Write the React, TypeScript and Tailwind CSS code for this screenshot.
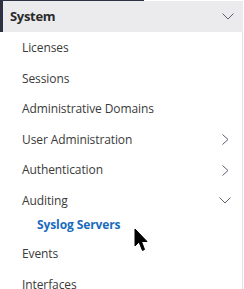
type Item = {
  label: string;
  icon?: 'right' | 'down';
  active?: boolean;
  sub?: boolean;
};

const items: Item[] = [
  { label: 'Licenses' },
  { label: 'Sessions' },
  { label: 'Administrative Domains' },
  { label: 'User Administration', icon: 'right' },
  { label: 'Authentication', icon: 'right' },
  { label: 'Auditing', icon: 'down' },
  { label: 'Syslog Servers', sub: true, active: true },
  { label: 'Events' },
  { label: 'Interfaces' },
];

function Chevron({ dir }: { dir: 'right' | 'down' }) {
  if (dir === 'down') {
    return (
      <svg width="12" height="7" viewBox="0 0 12 7" className="text-[#5a6070]">
        <path d="M0.5 0.5 L6 6 L11.5 0.5" fill="none" stroke="currentColor" strokeWidth="1" />
      </svg>
    );
  }
  return (
    <svg width="7" height="11" viewBox="0 0 7 11" className="text-[#5a6070]">
      <path d="M0.5 0.5 L6 5.5 L0.5 10.5" fill="none" stroke="currentColor" strokeWidth="1" />
    </svg>
  );
}

function Cursor() {
  return (
    <svg className="absolute left-[134px] top-[228px]" width="15" height="25" viewBox="0 0 15 25">
      <path d="M1 1 L1 18 L5 14 L8.5 22.5 L10.5 21.5 L7.5 13.5 L13 13.5 Z" fill="#000" stroke="#000" strokeWidth="1" strokeLinejoin="round" />
    </svg>
  );
}

export default function App() {
  return (
    <div className="relative w-[244px] h-[289px] overflow-hidden bg-white font-['Open_Sans',sans-serif] text-[#333]">
      <div className="h-px w-[144px] bg-[#2d3142]" />
      <div className="flex h-[31px] border-l-[3px] border-[#2d3142]">
        <div className="flex flex-1 items-center justify-between bg-[#ebebee] pl-[7px] pr-[9px] mr-[1px]">
          <span className="text-[13px] font-bold tracking-[-0.3px] text-[#2a2a2a]">System</span>
          <Chevron dir="down" />
        </div>
      </div>
      <div className="mr-[1px] border-r border-[#e3e3e6] pt-[1px] pb-4">
        {items.map((it) => (
          <div
            key={it.label}
            className={
              it.sub
                ? 'flex h-[24px] items-center pl-[37px] pr-[11px] -mt-[3px] mb-[2px]'
                : 'flex h-[30.5px] items-center justify-between pl-[22px] pr-[11px]'
            }
          >
            <span
              className={
                it.active
                  ? 'text-[12px] font-bold tracking-[-0.1px] text-[#1a6bbd]'
                  : 'text-[12px] tracking-[-0.1px] text-[#3a3a3a]'
              }
            >
              {it.label}
            </span>
            {it.icon && (
              <span className={it.icon === 'right' ? 'pr-[2px]' : ''}>
                <Chevron dir={it.icon} />
              </span>
            )}
          </div>
        ))}
      </div>
      <Cursor />
    </div>
  );
}
